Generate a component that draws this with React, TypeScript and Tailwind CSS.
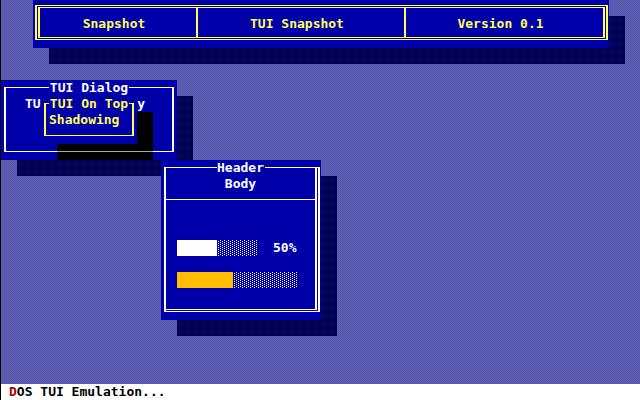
import type { ReactNode } from "react";

const SHADE =
  "bg-[repeating-conic-gradient(#000000_0_25%,#0000aa_0_50%)] bg-size-[2px_2px]";

const DOTS =
  "bg-[conic-gradient(at_3px_1px,#ffffff_25%,transparent_0),conic-gradient(at_3px_1px,#ffffff_25%,transparent_0)] bg-size-[4px_2px] bg-position-[0_0,-2px_1px]";

function Shadow() {
  return <div className={`absolute inset-0 top-4 left-4 -right-4 -bottom-4 ${SHADE}`} />;
}

function Title({ width, children }: { width: string; children: ReactNode }) {
  return (
    <h2 className={`mx-auto h-4 bg-[#0000aa] text-center leading-4 font-bold whitespace-nowrap ${width}`}>
      {children}
    </h2>
  );
}

function Meter({ label, value, width, fill, amount }: { label: string; value: number; width: string; fill: string; amount: string }) {
  return (
    <div
      role="progressbar"
      aria-label={label}
      aria-valuenow={value}
      className={`h-4 ${width} ${DOTS}`}
    >
      <div className={`h-4 ${fill} ${amount}`} />
    </div>
  );
}

function TopBar() {
  return (
    <header className="relative mr-[31px] ml-8">
      <Shadow />
      <div className="relative bg-[#0000aa] px-0.5 pt-[5px] pb-2 pr-px text-[#ffff55]">
        <div className="border-x-2 border-y border-[#ffff55] p-px">
          <div className="grid h-[31px] grid-cols-[158fr_208fr_197fr] border-x-2 border-y border-[#ffff55] text-center leading-8">
            <div className="h-[29px] border-r-2 border-[#ffff55] pr-2">Snapshot</div>
            <div className="h-[29px] border-r-2 border-[#ffff55] pr-2">TUI Snapshot</div>
            <div className="h-[29px] pr-2">Version 0.1</div>
          </div>
        </div>
      </div>
    </header>
  );
}

function OnTopWindow() {
  return (
    <section className="absolute top-4 left-10 w-24 text-[#ffff55]">
      <div className="absolute top-4 left-4 h-12 w-24 bg-black pt-[39px]">
        <div className="h-px bg-[#aaaaaa]" />
      </div>
      <div className="relative bg-[#0000aa] px-[3px] pt-[7px] pb-2">
        <div className="h-[33px] border-x-2 border-y border-[#ffff55]">
          <div className="-mt-2">
            <Title width="w-20">TUI On Top</Title>
            <p className="pl-[3px] leading-4">Shadowing</p>
          </div>
        </div>
      </div>
    </section>
  );
}

function DialogWindow() {
  return (
    <section className="absolute top-20 left-0 w-44">
      <Shadow />
      <div className="relative bg-[#0000aa] px-[3px] pt-[7px] pb-2">
        <div className="h-[65px] border-x-2 border-y border-white">
          <div className="-mt-2">
            <Title width="w-20">TUI Dialog</Title>
            <p className="mx-auto flex w-[128px] justify-between pr-2 leading-4">
              <span>TU</span>
              <span>y</span>
            </p>
          </div>
        </div>
      </div>
      <OnTopWindow />
    </section>
  );
}

function ProgressWindow() {
  return (
    <section className="absolute top-40 left-40 w-40">
      <Shadow />
      <div className="relative bg-[#0000aa] pt-[7px] pr-px pb-2 pl-[3px]">
        <div className="border-x-2 border-y border-white pr-px pb-px">
          <div className="flow-root h-[142px] border-r-2 border-b border-white">
            <div className="-mt-2">
              <Title width="w-12">Header</Title>
              <p className="h-6 border-b border-white text-center leading-4">Body</p>
            </div>
            <div className="mt-10 flex flex-col gap-4 pl-[11px]">
              <div className="flex h-4 gap-4 leading-4">
                <Meter label="White" value={50} width="w-20" fill="bg-white" amount="w-10" />
                <span>50%</span>
              </div>
              <Meter label="Amber" value={46} width="w-30" fill="bg-[#ffbf00]" amount="w-14" />
            </div>
          </div>
        </div>
      </div>
    </section>
  );
}

export default function App() {
  return (
    <div className="relative flex min-h-screen flex-col overflow-hidden border-l border-black bg-[repeating-conic-gradient(#606060_0_25%,#5555ff_0_50%)] bg-size-[2px_2px] font-['DejaVu_Sans_Mono',monospace] text-[13px] font-bold text-white">
      <TopBar />
      <main className="flex-1">
        <DialogWindow />
        <ProgressWindow />
      </main>
      <footer className="relative h-4 bg-white pl-2 leading-4 text-black">
        <span className="text-[#aa0000]">D</span>OS TUI Emulation...
      </footer>
    </div>
  );
}
